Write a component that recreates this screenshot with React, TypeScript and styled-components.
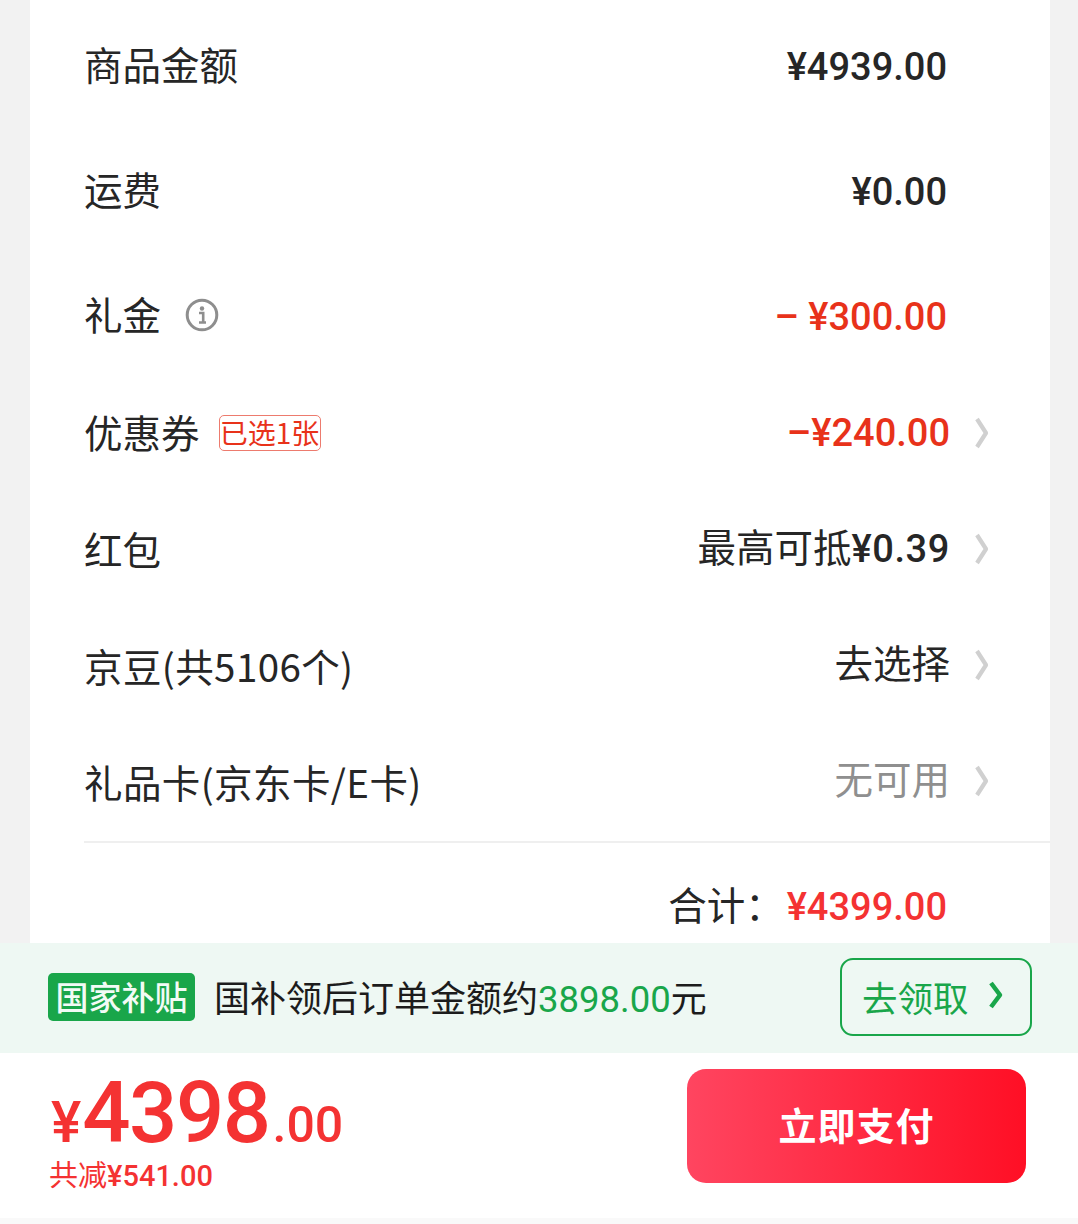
import React from "react";
import styled, { createGlobalStyle } from "styled-components";

const cjk = `"Noto Sans CJK SC", "Noto Sans", sans-serif`;
const num = `Roboto, "Noto Sans CJK SC", sans-serif`;

const Global = createGlobalStyle`
  html, body { margin: 0; padding: 0; background: #f2f2f2; }
  body { font-family: ${cjk}; }
`;

const Page = styled.div`
  width: 1078px;
  height: 1224px;
  display: flex;
  flex-direction: column;
  overflow: hidden;
`;

const Card = styled.section`
  margin: 0 28px 0 30px;
  height: 943px;
  box-sizing: border-box;
  background: #fff;
  padding: 4px 0 0 54px;
  display: flex;
  flex-direction: column;
`;

const Row = styled.div<{ $h: number; $top?: number }>`
  box-sizing: border-box;
  height: ${(p) => p.$h}px;
  padding-top: ${(p) => p.$top ?? 0}px;
  flex: none;
  display: flex;
  align-items: center;
  justify-content: space-between;
`;

const Left = styled.div<{ $lift?: number }>`
  display: flex;
  align-items: center;
  padding-bottom: ${(p) => p.$lift ?? 0}px;
`;

const Label = styled.span<{ $wide?: boolean }>`
  font-size: 38.5px;
  line-height: 50px;
  color: #262626;
  letter-spacing: ${(p) => (p.$wide ? "0.4px" : "0")};
`;

const Right = styled.div<{ $chevron?: boolean }>`
  display: flex;
  align-items: center;
  padding-right: ${(p) => (p.$chevron ? "100px" : "103px")};
  position: relative;
`;

const Value = styled.span<{ $color?: string; $spaced?: boolean }>`
  font-family: ${num};
  font-weight: 500;
  font-size: 38px;
  line-height: 50px;
  white-space: pre;
  letter-spacing: ${(p) => (p.$spaced ? "0.6px" : "0")};
  color: ${(p) => p.$color ?? "#262626"};
`;

const Note = styled.span<{ $color?: string }>`
  font-size: 38.5px;
  line-height: 50px;
  margin-bottom: 8px;
  color: ${(p) => p.$color ?? "#262626"};
`;

const Chevron = styled.svg`
  position: absolute;
  right: 60px;
  top: 50%;
  width: 16px;
  height: 32px;
  margin-top: -16px;
`;

const Tag = styled.span`
  margin: 4px 0 0 19px;
  box-sizing: border-box;
  width: 102px;
  height: 36px;
  border: 1px solid #ed7b6e;
  border-radius: 5px;
  color: #e8321a;
  font-size: 28px;
  line-height: 32px;
  text-align: center;
  white-space: nowrap;
`;

const InfoIcon = styled.svg`
  margin: 5px 0 0 24px;
  width: 34px;
  height: 34px;
`;

const TotalRow = styled.div`
  flex: 1;
  margin-top: 2px;
  border-top: 2px solid #efefef;
  display: flex;
  align-items: center;
  justify-content: flex-end;
  padding: 27px 103px 0 0;
`;

const TotalLabel = styled.span`
  font-size: 38.5px;
  line-height: 50px;
  color: #262626;
  margin: 0 3px 8px 0;
`;

const Banner = styled.div`
  height: 110px;
  flex: none;
  background: #eef8f3;
  display: flex;
  align-items: center;
  padding: 0 46px 0 48px;
`;

const Badge = styled.span`
  width: 147px;
  height: 48px;
  border-radius: 5px;
  background: #19a64a;
  color: #f2fbf5;
  font-size: 33px;
  line-height: 46px;
  font-weight: 500;
  text-align: center;
  white-space: nowrap;
  flex: none;
  margin-top: -2px;
`;

const BannerText = styled.span`
  margin-left: 19px;
  flex: 1;
  font-size: 36px;
  line-height: 50px;
  color: #1c1c1c;
  white-space: nowrap;
`;

const GreenNum = styled.span`
  font-family: ${num};
  font-size: 36.5px;
  color: #19a64a;
`;

const ClaimButton = styled.div`
  box-sizing: border-box;
  width: 192px;
  height: 78px;
  border: 2px solid #19a64a;
  border-radius: 13px;
  color: #19a64a;
  display: flex;
  align-items: center;
  padding-left: 20px;
  font-size: 35.5px;
  white-space: nowrap;
  flex: none;
  margin-top: -3px;
`;

const ClaimChevron = styled.svg`
  margin: -4px 0 0 19px;
  width: 16px;
  height: 30px;
`;

const Footer = styled.div`
  box-sizing: border-box;
  height: 171px;
  flex: none;
  background: #fff;
  border-bottom: 6px solid #f9f9f9;
  display: flex;
  justify-content: space-between;
  align-items: flex-start;
  padding: 0 52px 0 49px;
`;

const PriceBlock = styled.div`
  display: flex;
  flex-direction: column;
`;

const Price = styled.div`
  display: flex;
  align-items: baseline;
  font-family: ${num};
  color: #f43232;
  height: 104px;
  line-height: 120px;
  white-space: nowrap;
  font-weight: 500;
`;

const Yen = styled.span`
  font-size: 57px;
  margin: 0 1px 0 2px;
`;

const PriceMain = styled.span`
  font-size: 85px;
  letter-spacing: -1.5px;
`;

const PriceCents = styled.span`
  font-size: 50px;
  margin-left: 3px;
`;

const Saved = styled.div`
  font-size: 29px;
  line-height: 38px;
  margin-top: -3px;
  color: #f43232;
  white-space: nowrap;
  font-family: ${cjk};
`;

const SavedAmount = styled.span`
  font-family: ${num};
  font-weight: 500;
`;

const PayButton = styled.div`
  box-sizing: border-box;
  margin-top: 16px;
  width: 339px;
  height: 114px;
  padding-bottom: 6px;
  border-radius: 19px;
  background: linear-gradient(90deg, #ff4560 0%, #ff0f25 100%);
  color: #fff;
  font-weight: 700;
  font-size: 38px;
  letter-spacing: 1px;
  display: flex;
  align-items: center;
  justify-content: center;
`;

const Arrow = () => (
  <Chevron viewBox="0 0 16 32" fill="none">
    <path d="M3 2 L12 16 L3 30" stroke="#d0d0d0" strokeWidth="4.2" strokeLinejoin="round" />
  </Chevron>
);

const rows = [
  { label: "红包", note: "最高可抵", value: "¥0.39", lift: 2 },
  { label: "京豆(共5106个)", note: "去选择", lift: 0, wide: true },
  { label: "礼品卡(京东卡/E卡)", note: "无可用", muted: true, lift: 0, wide: true },
];

export default function App() {
  return (
    <Page>
      <Global />
      <Card>
        <Row $h={125}>
          <Left $lift={8}><Label>商品金额</Label></Left>
          <Right><Value>¥4939.00</Value></Right>
        </Row>
        <Row $h={125}>
          <Left $lift={8}><Label>运费</Label></Left>
          <Right><Value>¥0.00</Value></Right>
        </Row>
        <Row $h={121} $top={4}>
          <Left $lift={8}>
            <Label>礼金</Label>
            <InfoIcon viewBox="0 0 34 34" fill="none">
              <circle cx="17" cy="17" r="14.8" stroke="#8e8e8e" strokeWidth="3" />
              <circle cx="17" cy="10.5" r="2.2" fill="#8e8e8e" />
              <path d="M14 15 H18.2 V24 M14 24.5 H21" stroke="#8e8e8e" strokeWidth="2.6" />
            </InfoIcon>
          </Left>
          <Right><Value $color="#e8321a">– ¥300.00</Value></Right>
        </Row>
        <Row $h={116}>
          <Left $lift={4}>
            <Label>优惠券</Label>
            <Tag>已选1张</Tag>
          </Left>
          <Right $chevron>
            <Value $color="#e8321a">–¥240.00</Value>
            <Arrow />
          </Right>
        </Row>
        {rows.map((r) => (
          <Row $h={116} key={r.label}>
            <Left $lift={r.lift}><Label $wide={r.wide}>{r.label}</Label></Left>
            <Right $chevron>
              <Note $color={r.muted ? "#8f8f8f" : undefined}>{r.note}</Note>
              {r.value && <Value $spaced>{r.value}</Value>}
              <Arrow />
            </Right>
          </Row>
        ))}
        <TotalRow>
          <TotalLabel>{"合计\uFF1A"}</TotalLabel>
          <Value $color="#f43232">¥4399.00</Value>
        </TotalRow>
      </Card>
      <Banner>
        <Badge>国家补贴</Badge>
        <BannerText>
          国补领后订单金额约<GreenNum>3898.00</GreenNum>元
        </BannerText>
        <ClaimButton>
          去领取
          <ClaimChevron viewBox="0 0 16 30" fill="none">
            <path d="M3 3 L12 15 L3 27" stroke="#19a64a" strokeWidth="4.5" strokeLinejoin="round" />
          </ClaimChevron>
        </ClaimButton>
      </Banner>
      <Footer>
        <PriceBlock>
          <Price>
            <Yen>¥</Yen>
            <PriceMain>4398</PriceMain>
            <PriceCents>.00</PriceCents>
          </Price>
          <Saved>共减<SavedAmount>¥541.00</SavedAmount></Saved>
        </PriceBlock>
        <PayButton>立即支付</PayButton>
      </Footer>
    </Page>
  );
}
